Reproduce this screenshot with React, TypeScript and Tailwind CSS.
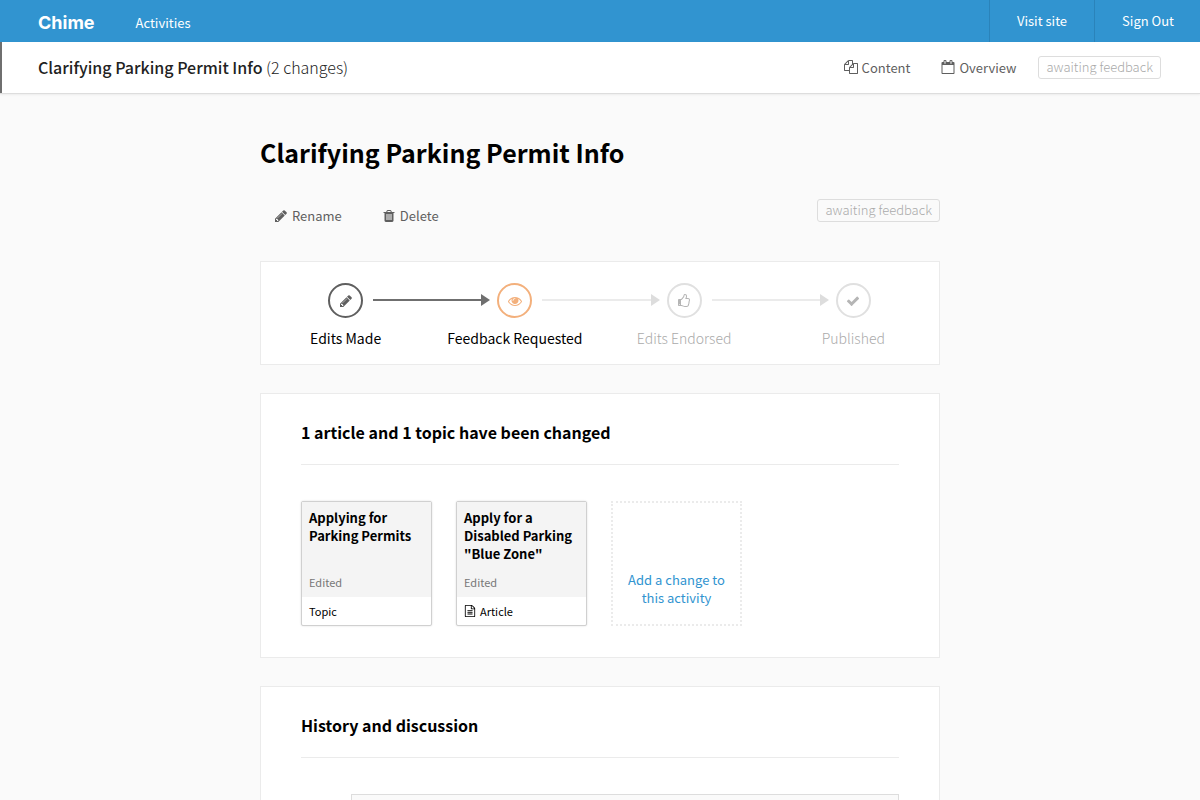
import type { ReactNode } from "react";

const icons = {
  pencil:
    "M491 1536l91-91-235-235-91 91v107h128v128h107zm523-928q0-22-22-22-10 0-17 7l-542 542q-7 7-7 17 0 22 22 22 10 0 17-7l542-542q7-7 7-17zm-54-192l416 416-832 832h-416v-416zm683 96q0 53-37 90l-166 166-416-416 166-165q36-38 90-38 53 0 91 38l235 234q37 39 37 91z",
  check:
    "M1671 566q0 40-28 68l-724 724-136 136q-28 28-68 28t-68-28l-136-136-362-362q-28-28-28-68t28-68l136-136q28-28 68-28t68 28l294 295 656-657q28-28 68-28t68 28l136 136q28 28 28 68z",
  eye: "M1664 960q-152-236-381-353 61 104 61 225 0 185-131.5 316.5t-316.5 131.5-316.5-131.5-131.5-316.5q0-121 61-225-229 117-381 353 133 205 333.5 326.5t434.5 121.5 434.5-121.5 333.5-326.5zm-720-384q0-20-14-34t-34-14q-125 0-214.5 89.5t-89.5 214.5q0 20 14 34t34 14 34-14 14-34q0-86 61-147t147-61q20 0 34-14t14-34zm848 384q0 34-20 69-140 230-376.5 368.5t-499.5 138.5-499.5-139-376.5-368q-20-35-20-69t20-69q140-229 376.5-368t499.5-139 499.5 139 376.5 368q20 35 20 69z",
  calendar:
    "M192 1664h1408v-1024h-1408v1024zm384-1216v-288q0-14-9-23t-23-9h-64q-14 0-23 9t-9 23v288q0 14 9 23t23 9h64q14 0 23-9t9-23zm768 0v-288q0-14-9-23t-23-9h-64q-14 0-23 9t-9 23v288q0 14 9 23t23 9h64q14 0 23-9t9-23zm384-64v1280q0 52-38 90t-90 38h-1408q-52 0-90-38t-38-90v-1280q0-52 38-90t90-38h128v-96q0-66 47-113t113-47h64q66 0 113 47t47 113v96h384v-96q0-66 47-113t113-47h64q66 0 113 47t47 113v96h128q52 0 90 38t38 90z",
  files:
    "M1696 384q40 0 68 28t28 68v1216q0 40-28 68t-68 28h-960q-40 0-68-28t-28-68v-288h-544q-40 0-68-28t-28-68v-672q0-40 20-88t48-76l408-408q28-28 76-48t88-20h416q40 0 68 28t28 68v328q68-40 128-40h416zm-544 213l-299 299h299v-299zm-640-384l-299 299h299v-299zm196 647l316-316v-416h-384v416q0 40-28 68t-68 28h-416v640h512v-256q0-40 20-88t48-76zm956 804v-1152h-384v416q0 40-28 68t-68 28h-416v640h896z",
  trash:
    "M704 1376v-704q0-14-9-23t-23-9h-64q-14 0-23 9t-9 23v704q0 14 9 23t23 9h64q14 0 23-9t9-23zm256 0v-704q0-14-9-23t-23-9h-64q-14 0-23 9t-9 23v704q0 14 9 23t23 9h64q14 0 23-9t9-23zm256 0v-704q0-14-9-23t-23-9h-64q-14 0-23 9t-9 23v704q0 14 9 23t23 9h64q14 0 23-9t9-23zm-544-992h448l-48-117q-7-9-17-11h-317q-10 2-17 11zm928 32v64q0 14-9 23t-23 9h-96v948q0 83-47 143.5t-113 60.5h-832q-66 0-113-58.5t-47-141.5v-952h-96q-14 0-23-9t-9-23v-64q0-14 9-23t23-9h309l70-167q15-37 54-63t79-26h320q40 0 79 26t54 63l70 167h309q14 0 23 9t9 23z",
  article:
    "M1596 380q28 28 48 76t20 88v1152q0 40-28 68t-68 28h-1344q-40 0-68-28t-28-68v-1600q0-40 28-68t68-28h896q40 0 88 20t76 48zm-444-244v376h376q-10-29-22-41l-313-313q-12-12-41-22zm384 1528v-1024h-416q-40 0-68-28t-28-68v-416h-768v1536h1280zm-1024-864q0-14 9-23t23-9h704q14 0 23 9t9 23v64q0 14-9 23t-23 9h-704q-14 0-23-9t-9-23v-64zm736 224q14 0 23 9t9 23v64q0 14-9 23t-23 9h-704q-14 0-23-9t-9-23v-64q0-14 9-23t23-9h704zm0 256q14 0 23 9t9 23v64q0 14-9 23t-23 9h-704q-14 0-23-9t-9-23v-64q0-14 9-23t23-9h704z",
  thumb:
    "M384 1344q0-26-19-45t-45-19-45 19-19 45 19 45 45 19 45-19 19-45zm1152-576q0-51-39-89.5t-89-38.5h-352q0-58 48-159.5t48-160.5q0-98-32-145t-128-47q-26 26-38 85t-30.5 125.5-59.5 109.5q-22 23-77 91-4 5-23 30t-31.5 41-34.5 42.5-40 44-38.5 35.5-40 27-35.5 9h-32v640h32q13 0 31.5 3t33 6.5 38 11 35 11.5 35.5 12.5 29 10.5q211 73 342 73h121q192 0 192-167 0-26-5-56 30-16 47.5-52.5t17.5-73.5-18-69q53-50 53-119 0-25-10-55.5t-25-47.5q32-1 53.5-47t21.5-81zm128-1q0 89-49 163 9 33 9 69 0 77-38 144 3 21 3 43 0 101-60 178 1 139-85 219.5t-227 80.5h-129q-96 0-189.5-22.5t-216.5-65.5q-116-40-138-40h-288q-53 0-90.5-37.5t-37.5-90.5v-640q0-53 37.5-90.5t90.5-37.5h274q36-24 137-155 58-75 107-128 24-25 35.5-85.5t30.5-126.5 62-108q39-37 90-37 84 0 151 32.5t102 101.5 35 186q0 93-48 192h176q104 0 180 76t76 179z",
};

type IconName = keyof typeof icons;

function Icon({ name, className }: { name: IconName; className: string }) {
  return (
    <svg viewBox="0 0 1792 1792" fill="currentColor" aria-hidden="true" className={className}>
      <path d={icons[name]} />
    </svg>
  );
}

function StatusBadge() {
  return (
    <span className="rounded-[3px] border border-[#dddddd] px-[7px] pb-px text-[13px] leading-5 font-light text-[#aaaaaa]">
      awaiting feedback
    </span>
  );
}

type Step = {
  label: string;
  icon: IconName;
  circle: string;
  text: string;
  before?: { line: string; head: string };
  after?: string;
};

const steps: Step[] = [
  {
    label: "Edits Made",
    icon: "pencil",
    circle: "border-[#5f5f5f] text-[#5f5f5f]",
    text: "text-black",
    after: "bg-[#6f6f6f]",
  },
  {
    label: "Feedback Requested",
    icon: "eye",
    circle: "border-[#f3b07c] text-[#f3b07c]",
    text: "text-black",
    before: { line: "bg-[#6f6f6f]", head: "border-l-[#6f6f6f]" },
    after: "bg-[#ebebeb]",
  },
  {
    label: "Edits Endorsed",
    icon: "thumb",
    circle: "border-[#e0e0e0] text-[#b5b5b5]",
    text: "font-light text-[#aaaaaa]",
    before: { line: "bg-[#ebebeb]", head: "border-l-[#dddddd]" },
    after: "bg-[#ebebeb]",
  },
  {
    label: "Published",
    icon: "check",
    circle: "border-[#e0e0e0] text-[#b5b5b5]",
    text: "font-light text-[#aaaaaa]",
    before: { line: "bg-[#ebebeb]", head: "border-l-[#dddddd]" },
  },
];

function StepItem({ step }: { step: Step }) {
  return (
    <li className="flex flex-col items-center">
      <div className="flex w-full items-start">
        <span className="mt-[11px] mr-[7px] flex h-3 flex-1 items-center">
          {step.before && (
            <>
              <span className={`h-[2px] flex-1 ${step.before.line}`} />
              <span className={`border-y-[6px] border-l-[9px] border-y-transparent ${step.before.head}`} />
            </>
          )}
        </span>
        <span className={`flex size-[35px] items-center justify-center rounded-full border-2 ${step.circle}`}>
          <Icon name={step.icon} className="size-[14px]" />
        </span>
        <span className="mt-[11px] ml-[7px] flex h-3 flex-1 items-center">
          {step.after && <span className={`ml-[3px] h-[2px] flex-1 ${step.after}`} />}
        </span>
      </div>
      <span className={`mt-2 text-[14px] leading-6 whitespace-nowrap ${step.text}`}>{step.label}</span>
    </li>
  );
}

function Panel({ title, children }: { title: string; children: ReactNode }) {
  return (
    <section className="mt-7 border border-[#ebebeb] bg-white px-10 pt-[26px] pb-[31px]">
      <h2 className="border-b border-[#ebebeb] pb-5 text-[16px] leading-6 font-bold text-black">{title}</h2>
      <div className="pt-9">{children}</div>
    </section>
  );
}

function ChangeCard({ title, kind, icon }: { title: string; kind: string; icon?: IconName }) {
  return (
    <li className="w-[131px]">
      <a
        href="#change"
        className="flex h-[125px] flex-col rounded-[2px] border border-[#d0d0d0] bg-white text-black shadow-[0_0_2px_rgba(0,0,0,0.15)]"
      >
        <span className="flex flex-1 flex-col justify-between bg-[#f4f4f4] px-[7px] pt-[7px] pb-[6px]">
          <span className="text-[13px] leading-[18px] font-bold">{title}</span>
          <span className="text-[11px] leading-[18px] text-[#777777]">Edited</span>
        </span>
        <span className="flex h-7 items-center gap-1 px-[7px] text-[11px] leading-[18px]">
          {icon && <Icon name={icon} className="size-3" />}
          {kind}
        </span>
      </a>
    </li>
  );
}

export default function App() {
  return (
    <div className="min-h-screen bg-[#fafafa] font-['Noto_Sans_CJK_SC','Noto_Sans',sans-serif] text-[13px]">
      <nav className="flex h-[42px] items-stretch justify-between bg-[#3194d0] text-white">
        <div className="flex items-center pt-1 pl-[38px]">
          <a href="#home" className="font-['Inter',sans-serif] text-[18px] leading-6 font-bold">
            Chime
          </a>
          <a href="#activities" className="ml-[41px] leading-5">
            Activities
          </a>
        </div>
        <div className="flex">
          <a href="#site" className="flex items-center border-l border-[#2a83ba] px-[27px]">
            Visit site
          </a>
          <a href="#signout" className="flex items-center border-l border-[#2a83ba] pr-[26px] pl-[27px]">
            Sign Out
          </a>
        </div>
      </nav>

      <header className="flex h-[52px] items-center justify-between border-b border-[#dddddd] bg-white shadow-[inset_2px_0_0_#6f6f6f,0_1px_2px_rgba(0,0,0,0.06)] pr-[39px] pl-[38px]">
        <p className="pb-[2px] text-[16px] leading-6 font-light text-[#222222]">
          <strong className="font-medium">Clarifying Parking Permit Info</strong> (2 changes)
        </p>
        <div className="flex items-center text-[#5f5f5f]">
          <a href="#content" className="flex items-center gap-1">
            <Icon name="files" className="mb-[2px] size-[14px]" />
            Content
          </a>
          <a href="#overview" className="ml-[31px] flex items-center gap-1">
            <Icon name="calendar" className="mb-[2px] size-[14px]" />
            Overview
          </a>
          <span className="ml-[22px] flex">
            <StatusBadge />
          </span>
        </div>
      </header>

      <main className="mx-auto w-full max-w-[680px] pt-10">
        <h1 className="text-[25px] leading-9 font-bold text-black">Clarifying Parking Permit Info</h1>
        <div className="mt-[29px] flex items-start justify-between pl-[14px]">
          <div className="flex gap-10 pt-[7px] text-[#5f5f5f]">
            <button type="button" className="flex items-center gap-1 leading-5">
              <Icon name="pencil" className="size-[14px]" />
              Rename
            </button>
            <button type="button" className="flex items-center gap-1 leading-5">
              <Icon name="trash" className="size-[14px]" />
              Delete
            </button>
          </div>
          <StatusBadge />
        </div>

        <ol className="mt-[35px] grid grid-cols-4 border border-[#ebebeb] bg-white pt-[21px] pr-px pb-[14px]">
          {steps.map((step) => (
            <StepItem key={step.label} step={step} />
          ))}
        </ol>

        <Panel title="1 article and 1 topic have been changed">
          <ul className="flex gap-6">
            <ChangeCard title="Applying for Parking Permits" kind="Topic" />
            <ChangeCard title={'Apply for a Disabled Parking "Blue Zone"'} kind="Article" icon="article" />
            <li className="w-[131px]">
              <a
                href="#add"
                className="flex h-[125px] items-end justify-center border-2 border-dotted border-[#ebebeb] px-3 pb-[17px] text-center leading-[18px] text-[#3194d0]"
              >
                Add a change to this activity
              </a>
            </li>
          </ul>
        </Panel>

        <Panel title="History and discussion">
          <div className="ml-[50px] h-24 border border-[#dddddd] bg-[#fafafa]" />
        </Panel>
      </main>
    </div>
  );
}
